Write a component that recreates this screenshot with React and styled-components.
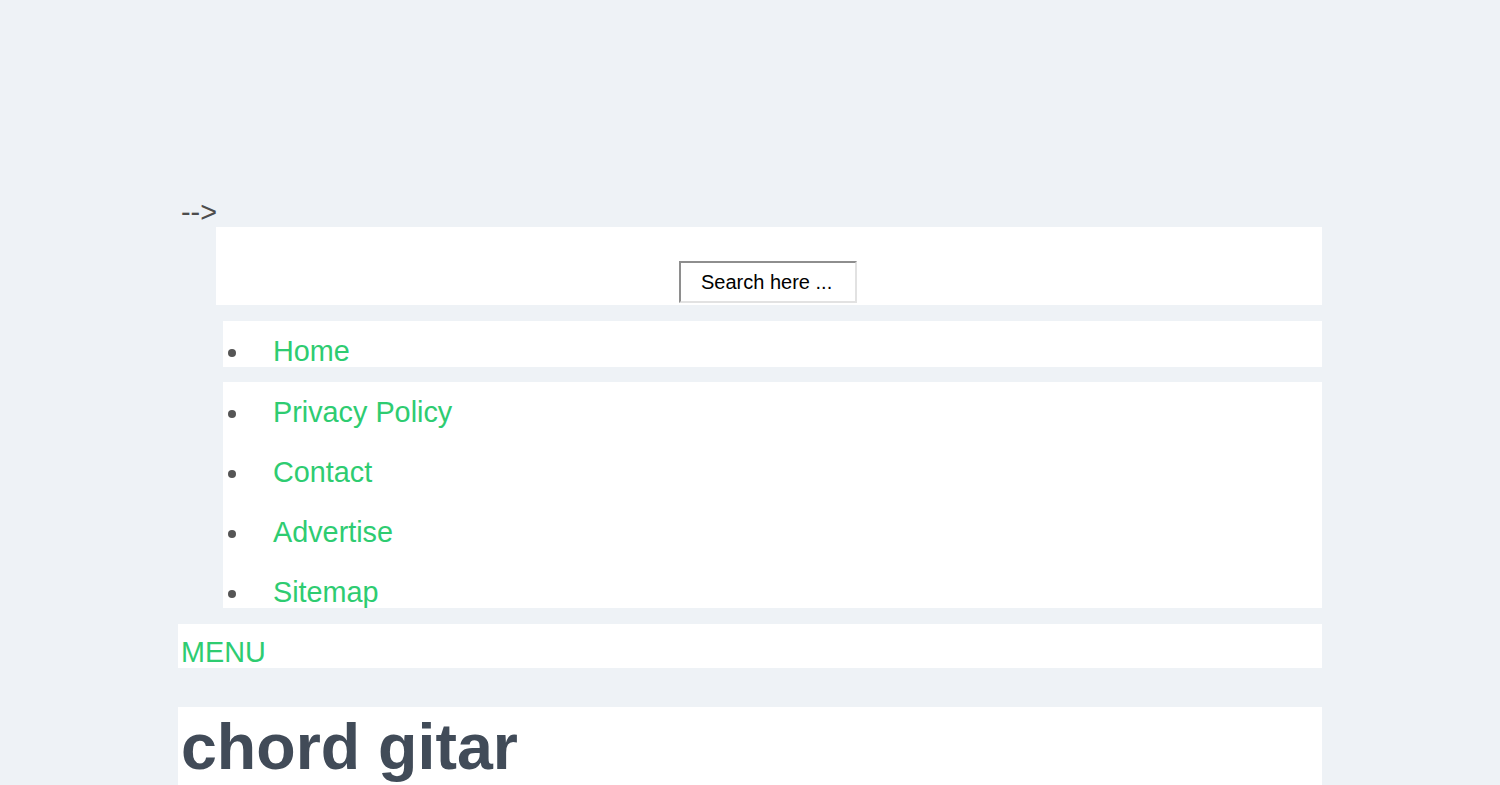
import React from "react";
import styled, { createGlobalStyle } from "styled-components";

const GlobalStyle = createGlobalStyle`
	html, body {
		margin: 0;
		padding: 0;
		background: #eef2f6;
		font-family: "Liberation Sans", Arial, sans-serif;
		font-size: 28.8px;
		color: #4a4a4a;
	}
`;

const Page = styled.div`
	width: 1144px;
	margin: 0 auto;
	padding-top: 197px;
`;

const Stray = styled.div`
	height: 30px;
	line-height: 30px;
	padding-left: 3px;
	color: #4d4d4d;
`;

const Header = styled.header`
	margin-left: 38px;
	height: 78px;
	background: #fff;
	display: flex;
	justify-content: center;
	align-items: flex-end;
	padding-bottom: 2px;
	box-sizing: border-box;
`;

const SearchInput = styled.input`
	width: 178px;
	height: 42px;
	margin-right: 2px;
	box-sizing: border-box;
	border: 2px solid #e2e2e2;
	border-top-color: #8e8e8e;
	border-left-color: #8e8e8e;
	padding: 0 20px;
	font-family: "Liberation Sans", Arial, sans-serif;
	font-size: 20px;
	color: #000;
	background: #fff;
	outline: none;
`;

const Nav = styled.nav`
	margin: 16px 0 0 45px;
`;

const List = styled.ul`
	display: flow-root;
	list-style: none;
	margin: 0 0 15px;
	padding: 0;
	background: #fff;
`;

const Item = styled.li`
	display: flex;
	align-items: center;
	height: 60px;
	line-height: 60px;
	&:last-child {
		margin-bottom: -14px;
	}
	&::before {
		content: "";
		width: 8px;
		height: 8px;
		border-radius: 50%;
		background: #555;
		margin: 3px 37px 0 5px;
	}
`;

const Link = styled.a`
	color: #2ecc71;
	text-decoration: none;
`;

const MenuBar = styled.div`
	margin-top: 16px;
	height: 44px;
	line-height: 57px;
	padding-left: 3px;
	background: #fff;
	color: #2ecc71;
`;

const TitleBox = styled.div`
	margin-top: 39px;
	background: #fff;
	padding: 3px 3px 20px;
`;

const Title = styled.h1`
	margin: 0;
	font-size: 64.5px;
	line-height: 1.15;
	font-weight: bold;
	color: #414b58;
`;

const navGroups = [["Home"], ["Privacy Policy", "Contact", "Advertise", "Sitemap"]];

export default function App() {
	return (
		<>
			<GlobalStyle />
			<Page>
				<Stray>--&gt;</Stray>
				<Header>
					<SearchInput defaultValue="Search here ..." />
				</Header>
				<Nav>
					{navGroups.map((group, i) => (
						<List key={i}>
							{group.map((label) => (
								<Item key={label}>
									<Link href="#">{label}</Link>
								</Item>
							))}
						</List>
					))}
				</Nav>
				<MenuBar>MENU</MenuBar>
				<TitleBox>
					<Title>chord gitar</Title>
				</TitleBox>
			</Page>
		</>
	);
}
